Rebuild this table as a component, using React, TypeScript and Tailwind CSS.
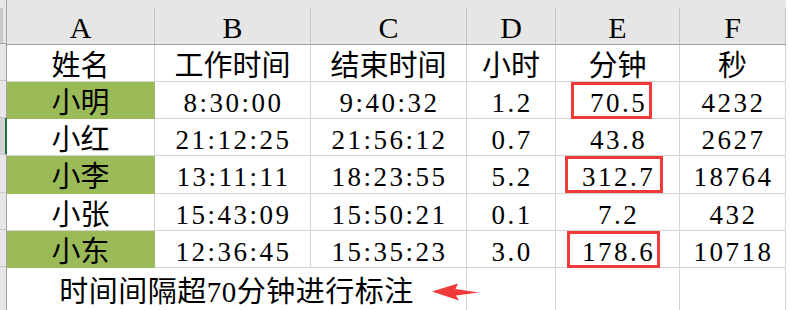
import React from "react";

const rows = [
  { name: "姓名", cells: ["工作时间", "结束时间", "小时", "分钟", "秒"], head: true, h: "h-[37px]" },
  { name: "小明", cells: ["8:30:00", "9:40:32", "1.2", "70.5", "4232"], green: true, h: "h-[37px]" },
  { name: "小红", cells: ["21:12:25", "21:56:12", "0.7", "43.8", "2627"], h: "h-[37px]" },
  { name: "小李", cells: ["13:11:11", "18:23:55", "5.2", "312.7", "18764"], green: true, h: "h-[38px]" },
  { name: "小张", cells: ["15:43:09", "15:50:21", "0.1", "7.2", "432"], h: "h-[37px]" },
  { name: "小东", cells: ["12:36:45", "15:35:23", "3.0", "178.6", "10718"], green: true, h: "h-[37px]" },
];

const gridCols = "grid grid-cols-[148px_156px_156px_89px_124px_106px]";

export default function App() {
  return (
    <div className="relative w-[789px] h-[310px] overflow-hidden bg-white text-black font-['Liberation_Serif','Noto_Sans_CJK_SC',serif]">
      <div className="flex">
        {/* row header strip */}
        <div className="w-[7px] shrink-0 bg-[#e6e6e6] border-r border-[#a3a3a3] flex flex-col">
          <div className="h-[44px] border-b border-[#a3a3a3] flex">
            <div className="w-[3px] mt-[8px] bg-[#c8c8c8]" />
          </div>
          {rows.map((r, i) => (
            <div
              key={r.name}
              className={`${r.h} border-b border-[#c8c8c8] ${i === 2 ? "bg-[#d2d2d2] flex justify-end" : ""}`}
            >
              {i === 2 && <div className="w-[2px] -mr-px bg-[#217346]" />}
            </div>
          ))}
          <div className="h-[43px]" />
        </div>

        <div className="flex flex-col">
          {/* column header */}
          <div className="bg-[#e6e6e6] pt-[8px] border-b border-[#9e9e9e]">
            <div className={`${gridCols} h-[36px]`}>
              {["A", "B", "C", "D", "E", "F"].map((c) => (
                <div key={c} className="border-r border-[#c4c4c4] flex items-center justify-center pt-1 text-[30px] leading-none">
                  {c}
                </div>
              ))}
            </div>
          </div>

          {rows.map((r) => (
            <div key={r.name} className={`${gridCols} ${r.h}`}>
              <div
                className={`flex items-center justify-center pt-1.5 text-[29px] leading-none border-r border-b ${
                  r.green ? "bg-[#9bbb59] border-[#9bbb59]" : "border-[#d4d4d4]"
                }`}
              >
                {r.name}
              </div>
              {r.cells.map((c, j) => (
                <div
                  key={j}
                  className={`flex items-center justify-center pt-1.5 leading-none border-r border-b border-[#d4d4d4] ${
                    r.head ? "text-[29px]" : "text-[27px] tracking-[2.5px] pl-[2px]"
                  }`}
                >
                  {c}
                </div>
              ))}
            </div>
          ))}

          {/* note row */}
          <div className={`${gridCols} h-[43px]`}>
            <div className="col-span-3 border-r border-[#d4d4d4] flex justify-center pt-[10px] text-[29px] tracking-[0.5px] leading-none">
              时间间隔超70分钟进行标注
            </div>
            <div className="border-r border-[#d4d4d4]" />
            <div className="border-r border-[#d4d4d4]" />
            <div className="border-r border-[#d4d4d4]" />
          </div>
        </div>
      </div>

      {/* red highlight boxes */}
      <div className="absolute left-[571px] top-[82px] w-[81px] h-[37px] border-[3px] border-[#f03a3a]" />
      <div className="absolute left-[565px] top-[156px] w-[98px] h-[37px] border-[3px] border-[#f03a3a]" />
      <div className="absolute left-[567px] top-[231px] w-[93px] h-[37px] border-[3px] border-[#f03a3a]" />

      {/* arrow */}
      <svg className="absolute left-[430px] top-[280px]" width="52" height="24" viewBox="0 0 52 24">
        <path d="M2 11.5 L28 3.5 L25.5 9 L49 12.5 L26 15.5 L29 20.5 Z" fill="#f03a3a" />
      </svg>
    </div>
  );
}
